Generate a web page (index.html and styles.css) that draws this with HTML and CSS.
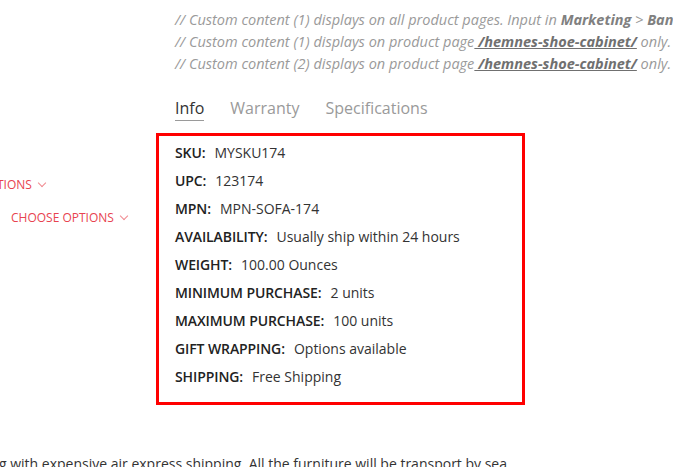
FILE: index.html
```html
<!DOCTYPE html>
<html lang="en">
<head>
<meta charset="utf-8">
<title>Product details</title>
<link rel="stylesheet" href="styles.css">
</head>
<body>
<div class="page">
  <aside class="sidebar">
    <a class="opt opt-cut" href="#">Choose Options <span class="chev"></span></a>
    <a class="opt opt-main" href="#">Choose Options <span class="chev"></span></a>
  </aside>
  <main class="main">
    <div class="notes">
      <p>// Custom content (1) displays on all product pages. Input in <b>Marketing</b> &gt; <b>Banners</b></p>
      <p>// Custom content (1) displays on product page<a href="#"> /hemnes-shoe-cabinet/</a> only.</p>
      <p>// Custom content (2) displays on product page<a href="#"> /hemnes-shoe-cabinet/</a> only.</p>
    </div>
    <nav class="tabs">
      <span class="tab active">Info</span>
      <span class="tab">Warranty</span>
      <span class="tab">Specifications</span>
    </nav>
    <dl class="specs">
      <div class="row"><dt>SKU:</dt><dd>MYSKU174</dd></div>
      <div class="row"><dt>UPC:</dt><dd>123174</dd></div>
      <div class="row"><dt>MPN:</dt><dd>MPN-SOFA-174</dd></div>
      <div class="row"><dt>Availability:</dt><dd>Usually ship within 24 hours</dd></div>
      <div class="row"><dt>Weight:</dt><dd>100.00 Ounces</dd></div>
      <div class="row"><dt>Minimum Purchase:</dt><dd>2 units</dd></div>
      <div class="row"><dt>Maximum Purchase:</dt><dd>100 units</dd></div>
      <div class="row"><dt>Gift Wrapping:</dt><dd>Options available</dd></div>
      <div class="row"><dt>Shipping:</dt><dd>Free Shipping</dd></div>
    </dl>
  </main>
</div>
<p class="desc">g with expensive air express shipping. All the furniture will be transport by sea.</p>
</body>
</html>
```
FILE: styles.css
```css
html, body {
  margin: 0;
  padding: 0;
  background: #fff;
  overflow: hidden;
}
body {
  font-family: "Open Sans", "DejaVu Sans", sans-serif;
  color: #333;
  width: 673px;
  height: 467px;
}
.page {
  display: flex;
}
.sidebar {
  width: 156px;
  flex: none;
  display: flex;
  flex-direction: column;
  padding-top: 175px;
}
.opt {
  display: flex;
  align-items: center;
  gap: 5px;
  white-space: nowrap;
  font-size: 12px;
  line-height: 20px;
  text-transform: uppercase;
  color: #e8434f;
  text-decoration: none;
}
.opt-cut {
  margin-left: -71px;
}
.opt-main {
  margin-left: 11px;
  margin-top: 13px;
}
.chev {
  display: inline-block;
  width: 5px;
  height: 5px;
  border-right: 1px solid #f08a90;
  border-bottom: 1px solid #f08a90;
  transform: rotate(45deg);
  margin-top: -4px;
  margin-left: 2px;
}
.main {
  flex: 1;
  min-width: 0;
}
.notes {
  padding: 9px 0 0 19px;
  white-space: nowrap;
}
.notes p {
  margin: 0;
  font-size: 14.5px;
  line-height: 22px;
  font-style: italic;
  color: #9a9a9a;
}
.notes b {
  font-weight: 700;
  color: #808080;
}
.notes a {
  font-weight: 700;
  color: #707070;
  text-decoration: underline;
}
.tabs {
  display: flex;
  gap: 26px;
  margin: 21px 0 0 19px;
}
.tab {
  font-size: 16px;
  line-height: 24px;
  color: #9a9a9a;
}
.tab.active {
  color: #333;
  border-bottom: 1px solid #9a9a9a;
}
.specs {
  width: 369px;
  box-sizing: border-box;
  margin: 12px 0 0 0;
  border: 3px solid #ff0000;
  padding: 3px 16px 11px;
}
.row {
  display: flex;
  gap: 9px;
  line-height: 28px;
  font-size: 14px;
}
.row dt {
  font-weight: 600;
  text-transform: uppercase;
  color: #222;
  letter-spacing: -0.1px;
}
.row dd {
  margin: 0;
  color: #333;
}
.desc {
  margin: 49px 0 0 -1px;
  font-size: 14px;
  line-height: 20px;
  color: #333;
  white-space: nowrap;
}
```
